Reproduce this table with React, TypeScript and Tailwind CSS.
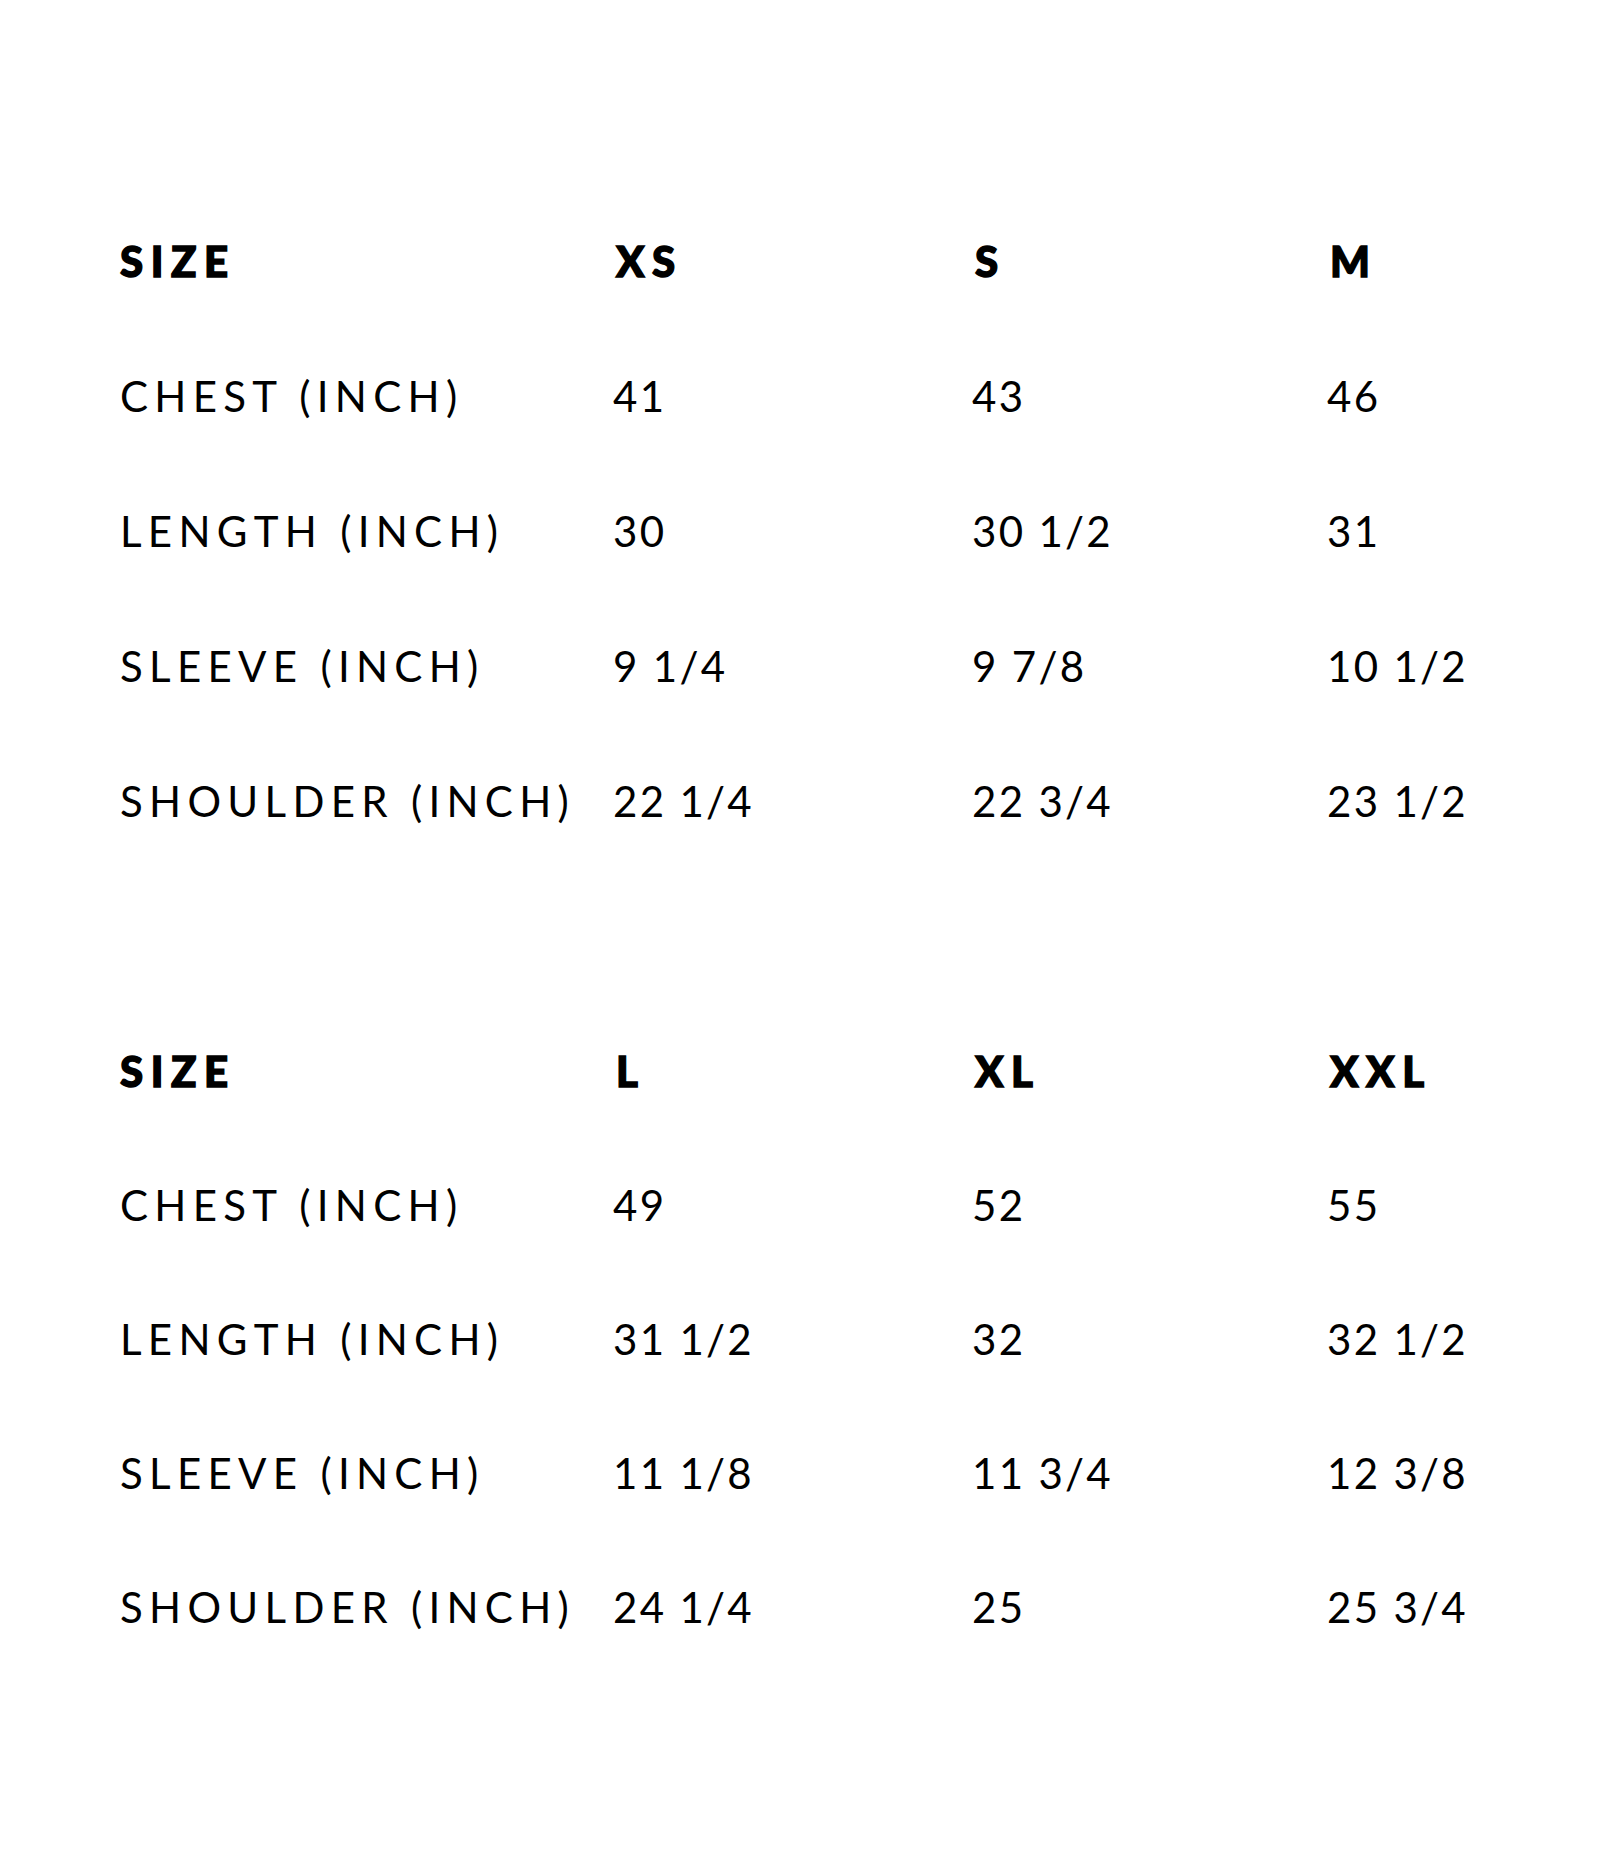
import React from 'react';

type Table = {
  sizes: string[];
  rows: { label: string; values: string[] }[];
};

const tables: Table[] = [
  {
    sizes: ['XS', 'S', 'M'],
    rows: [
      { label: 'CHEST (INCH)', values: ['41', '43', '46'] },
      { label: 'LENGTH (INCH)', values: ['30', '30 1/2', '31'] },
      { label: 'SLEEVE (INCH)', values: ['9 1/4', '9 7/8', '10 1/2'] },
      { label: 'SHOULDER (INCH)', values: ['22 1/4', '22 3/4', '23 1/2'] },
    ],
  },
  {
    sizes: ['L', 'XL', 'XXL'],
    rows: [
      { label: 'CHEST (INCH)', values: ['49', '52', '55'] },
      { label: 'LENGTH (INCH)', values: ['31 1/2', '32', '32 1/2'] },
      { label: 'SLEEVE (INCH)', values: ['11 1/8', '11 3/4', '12 3/8'] },
      { label: 'SHOULDER (INCH)', values: ['24 1/4', '25', '25 3/4'] },
    ],
  },
];

const SizeTable: React.FC<{ table: Table; rowH: string }> = ({ table, rowH }) => {
  const cell = `${rowH} flex items-center`;
  const head = `${cell} font-black text-[42px] tracking-[0.18em] [-webkit-text-stroke:1.4px_black]`;
  return (
    <div className="grid grid-cols-[493px_359px_355px_1fr]">
      <div className={head}>SIZE</div>
      {table.sizes.map((s) => (
        <div key={s} className={`${head} pl-[3px]`}>
          {s}
        </div>
      ))}
      {table.rows.map((row) => (
        <React.Fragment key={row.label}>
          <div className={`${cell} tracking-[0.15em]`}>{row.label}</div>
          {row.values.map((v, i) => (
            <div key={i} className={`${cell} tracking-[0.055em]`}>
              {v}
            </div>
          ))}
        </React.Fragment>
      ))}
    </div>
  );
};

export default function App() {
  return (
    <div
      className="w-[1600px] h-[1875px] bg-white text-black text-[42px] leading-none pl-[120px] pt-[193px] flex flex-col gap-[136px]"
      style={{ fontFamily: 'Lato, "Open Sans", sans-serif' }}
    >
      <SizeTable table={tables[0]} rowH="h-[135px]" />
      <SizeTable table={tables[1]} rowH="h-[134px]" />
    </div>
  );
}
